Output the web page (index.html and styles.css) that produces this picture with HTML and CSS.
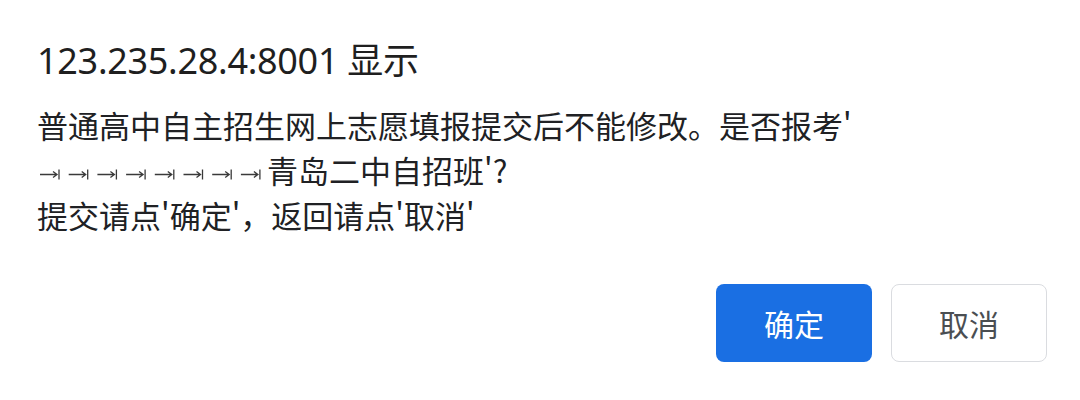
FILE: index.html
```html
<!DOCTYPE html>
<html lang="zh-CN">
<head>
<meta charset="utf-8">
<title>123.235.28.4:8001 显示</title>
<link rel="stylesheet" href="styles.css">
</head>
<body>
<div class="dialog">
  <div class="title">123.235.28.4:8001 显示</div>
  <div class="message">
    <div class="line">普通高中自主招生网上志愿填报提交后不能修改。是否报考'</div>
    <div class="line"><span class="tabs"><svg class="tab" viewBox="0 0 230 12" width="230" height="12" aria-hidden="true"><g fill="none" stroke="#3a3a3a" stroke-width="1.3"><path d="M3 6.5H20M16 3.5L20 6.5L16 9.5M22 1.5V11.5"/><path d="M31.7 6.5H48.7M44.7 3.5L48.7 6.5L44.7 9.5M50.7 1.5V11.5"/><path d="M60.4 6.5H77.4M73.4 3.5L77.4 6.5L73.4 9.5M79.4 1.5V11.5"/><path d="M89.1 6.5H106.1M102.1 3.5L106.1 6.5L102.1 9.5M108.1 1.5V11.5"/><path d="M117.8 6.5H134.8M130.8 3.5L134.8 6.5L130.8 9.5M136.8 1.5V11.5"/><path d="M146.5 6.5H163.5M159.5 3.5L163.5 6.5L159.5 9.5M165.5 1.5V11.5"/><path d="M175.2 6.5H192.2M188.2 3.5L192.2 6.5L188.2 9.5M194.2 1.5V11.5"/><path d="M203.9 6.5H220.9M216.9 3.5L220.9 6.5L216.9 9.5M222.9 1.5V11.5"/></g></svg></span>青岛二中自招班'?</div>
    <div class="line">提交请点'确定'，返回请点'取消'</div>
  </div>
  <div class="actions">
    <button class="btn btn-primary">确定</button>
    <button class="btn btn-secondary">取消</button>
  </div>
</div>
</body>
</html>
```

FILE: styles.css
```css
html, body {
  margin: 0;
  padding: 0;
  background: #ffffff;
}

body {
  width: 1080px;
  height: 400px;
  overflow: hidden;
  font-family: "Noto Sans CJK SC", "Noto Sans", sans-serif;
  color: #202124;
}

.dialog {
  padding: 36px 33px 0 37px;
}

.title {
  font-family: "Noto Sans", "Noto Sans CJK SC", sans-serif;
  font-size: 36px;
  line-height: 50px;
  letter-spacing: -0.3px;
  color: #1f1f1f;
}

.message {
  margin-top: 16px;
  font-size: 31px;
  color: #202124;
}

.line {
  line-height: 45px;
  height: 45px;
  white-space: nowrap;
}

.tabs {
  display: inline-block;
  width: 230px;
  vertical-align: baseline;
}

.tab {
  display: block;
  width: 230px;
  height: 12px;
  margin-bottom: 3px;
}

.actions {
  display: flex;
  justify-content: flex-end;
  gap: 19px;
  margin-top: 47px;
}

.btn {
  width: 156px;
  height: 78px;
  border-radius: 8px;
  font-family: "Noto Sans CJK SC", sans-serif;
  font-size: 30px;
  padding: 0;
}

.btn-primary {
  background: #1a6fe3;
  border: none;
  color: #ffffff;
}

.btn-secondary {
  background: #ffffff;
  border: 1px solid #dadce0;
  color: #4a4e52;
}
```
